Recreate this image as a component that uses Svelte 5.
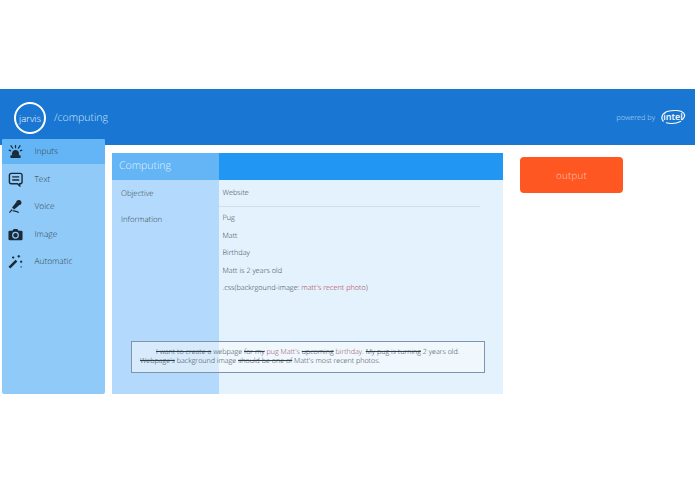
<script>
  const inputs = [
    { label: 'Inputs', icon: 'alarm' },
    { label: 'Text', icon: 'chat' },
    { label: 'Voice', icon: 'mic' },
    { label: 'Image', icon: 'camera' },
    { label: 'Automatic', icon: 'wand' }
  ];
  const info = ['Pug', 'Matt', 'Birthday', 'Matt is 2 years old'];
</script>

<div class="page">
  <header class="bar">
    <div class="logo">jarvis</div>
    <div class="crumb">/computing</div>
    <div class="powered">powered by</div>
    <svg class="intel" viewBox="0 0 26 16" width="26" height="16" aria-hidden="true">
      <path d="M3.500 12.500C.500 9.500 1.500 4 8 2.300c6-1.500 13-1 15.500 1.500 2 2.200 1 5.500-2 7.300" fill="none" stroke="#fff" stroke-width="1.100"/>
      <path d="M6 13.800c5 1.200 11 .500 15-1.600" fill="none" stroke="#fff" stroke-width="1.100"/>
      <text x="13" y="10.800" text-anchor="middle" class="intel-text">intel</text>
    </svg>
  </header>

  <div class="content">
    <nav class="side">
      {#each inputs as item, i}
        <div class="nav-item" class:active={i === 0}>
          <svg class="nav-icon" viewBox="0 0 16 16" width="15" height="15" aria-hidden="true">
            {#if item.icon === 'alarm'}
              <path d="M4.300 12.500V10C4.300 7.800 5.900 6.300 8 6.300s3.700 1.500 3.700 3.700v2.500z" fill="#1b2a38"/>
              <rect x="2.500" y="12" width="11" height="3" rx="0.800" fill="#1b2a38"/>
              <path d="M8 1v3.500M2.800 1.500l2.400 3.300M13.200 1.500l-2.400 3.300M.8 6.500l2.500.8M15.200 6.500l-2.500.8" stroke="#1b2a38" stroke-width="1.300" fill="none"/>
            {:else if item.icon === 'chat'}
              <path d="M3.500 1.500h9.500a2 2 0 0 1 2 2v7a2 2 0 0 1-2 2h-.500v2.300l-2.400-2.300H3.500a2 2 0 0 1-2-2v-7a2 2 0 0 1 2-2z" fill="none" stroke="#1b2a38" stroke-width="1.500"/>
              <path d="M4.500 5.200h7.500M4.500 8.500h7.500" stroke="#1b2a38" stroke-width="1.400"/>
            {:else if item.icon === 'mic'}
              <path d="M8.500 3.800l3.200 3.200-5.200 4.200-2.200-2.200z" fill="#1b2a38"/>
              <circle cx="11.500" cy="3.800" r="2.800" fill="#1b2a38"/>
              <path d="M4.500 11.200L1.500 14.500M5 12.800c2-.500 4 .200 6.500 1.700" stroke="#1b2a38" stroke-width="1.200" fill="none"/>
            {:else if item.icon === 'camera'}
              <path d="M1.800 4h3l1.200-1.800h4L11.200 4h3a1.300 1.300 0 0 1 1.300 1.300v7.400a1.300 1.300 0 0 1-1.300 1.300H1.800a1.300 1.300 0 0 1-1.300-1.300V5.300A1.300 1.300 0 0 1 1.800 4z" fill="#1b2a38"/>
              <circle cx="8" cy="8.800" r="3" fill="none" stroke="#90caf9" stroke-width="1.300"/>
            {:else}
              <path d="M1.500 14.500L9 7" stroke="#1b2a38" stroke-width="2.800" fill="none"/>
              <path d="M11.500 1v3M10 2.500h3M14 7v2.500M12.800 8.200h2.400M5.500 2.500v2.500M4.300 3.700h2.400M14 13v1.500" stroke="#1b2a38" stroke-width="1.100" fill="none"/>
            {/if}
          </svg>
          <span class="nav-label">{item.label}</span>
        </div>
      {/each}
    </nav>

    <main class="panel">
      <div class="panel-head">
        <div class="head-left">Computing</div>
        <div class="head-right"></div>
      </div>
      <div class="panel-row first">
        <div class="key">Objective</div>
        <div class="value"><p>Website</p></div>
      </div>
      <div class="panel-row grow">
        <div class="key">Information</div>
        <div class="value">
          <div class="rule"></div>
          {#each info as line}
            <p>{line}</p>
          {/each}
          <p>.css(backrgound-image: <span class="red">matt's recent photo</span>)</p>
        </div>
      </div>
      <div class="sentence">
        <div class="line one"><s>I want to create a</s> webpage <s>for my</s> <span class="soft">pug Matt's</span> <s>upcoming</s> <span class="soft">birthday.</span> <s>My pug is turning</s> 2 years old.</div>
        <div class="line"><s>Webpage's</s> background image <s>should be one of</s> Matt's most recent photos.</div>
      </div>
    </main>

    <button class="output">output</button>
  </div>
</div>

<style>
  :global(body) {
    margin: 0;
    background: #fff;
  }
  .page {
    width: 695px;
    height: 494px;
    padding-top: 89px;
    box-sizing: border-box;
    font-family: "Open Sans", sans-serif;
    font-weight: 300;
    color: #333f47;
    overflow: hidden;
    text-rendering: geometricPrecision;
  }
  .bar {
    height: 56px;
    background: #1976d2;
    display: flex;
    align-items: center;
    padding: 0 9px 0 14px;
    box-sizing: border-box;
    color: #fff;
  }
  .logo {
    width: 32px;
    height: 32px;
    border: 2.500px solid #fff;
    border-radius: 50%;
    box-sizing: border-box;
    display: flex;
    align-items: center;
    justify-content: center;
    font-size: 9.500px;
    font-weight: 300;
    margin-top: 2px;
  }
  .crumb {
    margin-left: 8px;
    padding-top: 2px;
    font-size: 10.500px;
    color: #d5e7f8;
    font-weight: 300;
    flex: 1;
  }
  .powered {
    padding-top: 2px;
    font-size: 7.300px;
    color: #bbdefb;
    margin-right: 5px;
    font-weight: 300;
  }
  .intel-text {
    font-size: 9px;
    font-weight: 600;
    fill: #fff;
    font-family: "Open Sans", sans-serif;
  }
  .content {
    display: flex;
    align-items: flex-start;
    padding-left: 2px;
    margin-top: -6px;
  }
  .side {
    width: 103px;
    height: 255px;
    background: #90caf9;
    border-radius: 2px;
    flex: none;
    display: flex;
    flex-direction: column;
  }
  .nav-item {
    display: flex;
    align-items: center;
    height: 27.400px;
    padding-left: 6px;
    font-size: 8.300px;
    color: #333f47;
  }
  .nav-item.active {
    height: 25px;
    background: #64b5f6;
    border-radius: 2px 2px 0 0;
    margin-bottom: 1.800px;
  }
  .nav-icon {
    flex: none;
  }
  .nav-label {
    margin-left: 11.500px;
  }
  .panel {
    position: relative;
    width: 391px;
    height: 241px;
    margin: 14px 0 0 7px;
    flex: none;
    background: linear-gradient(to right, #b3dafc 107px, #e3f2fd 107px);
    display: flex;
    flex-direction: column;
    font-size: 7.300px;
    color: #333f47;
  }
  .panel-head {
    display: flex;
    height: 27px;
    flex: none;
  }
  .head-left {
    width: 107px;
    background: #64b5f6;
    color: #e3f2fd;
    font-size: 10.500px;
    line-height: 27px;
    padding-left: 7px;
    box-sizing: border-box;
  }
  .head-right {
    flex: 1;
    background: #2196f3;
  }
  .panel-row {
    display: flex;
  }
  .panel-row.first {
    height: 26px;
  }
  .key {
    width: 107px;
    padding: 9px 0 0 9px;
    box-sizing: border-box;
    flex: none;
    font-size: 7.800px;
  }
  .value {
    position: relative;
    padding: 8px 0 0 3.500px;
  }
  .value p {
    margin: 0 0 6.500px;
    line-height: 11px;
  }
  .grow .value {
    padding-top: 7px;
  }
  .grow .key {
    padding-top: 9px;
  }
  .rule {
    position: absolute;
    top: 0;
    left: 0;
    width: 261px;
    height: 1px;
    background: #cfdfe9;
  }
  .red {
    color: #b5304b;
  }
  .sentence {
    position: absolute;
    left: 19px;
    top: 188px;
    width: 354px;
    height: 32px;
    box-sizing: border-box;
    border: 1px solid #7f95ad;
    background: rgba(255, 255, 255, 0.470);
    padding: 6px 4px 0 8px;
    font-size: 7.150px;
    line-height: 8.500px;
    color: #333f47;
    white-space: nowrap;
  }
  .line.one {
    padding-left: 16px;
  }
  .soft {
    color: #8a4a5c;
  }
  .output {
    width: 103px;
    height: 36px;
    margin: 18px 0 0 17px;
    flex: none;
    border: none;
    border-radius: 4px;
    background: #ff5722;
    color: #ffccbc;
    font-family: "Open Sans", sans-serif;
    font-size: 9.700px;
    font-weight: 300;
    letter-spacing: 0.300px;
    padding: 0;
    text-rendering: geometricPrecision;
  }
</style>
